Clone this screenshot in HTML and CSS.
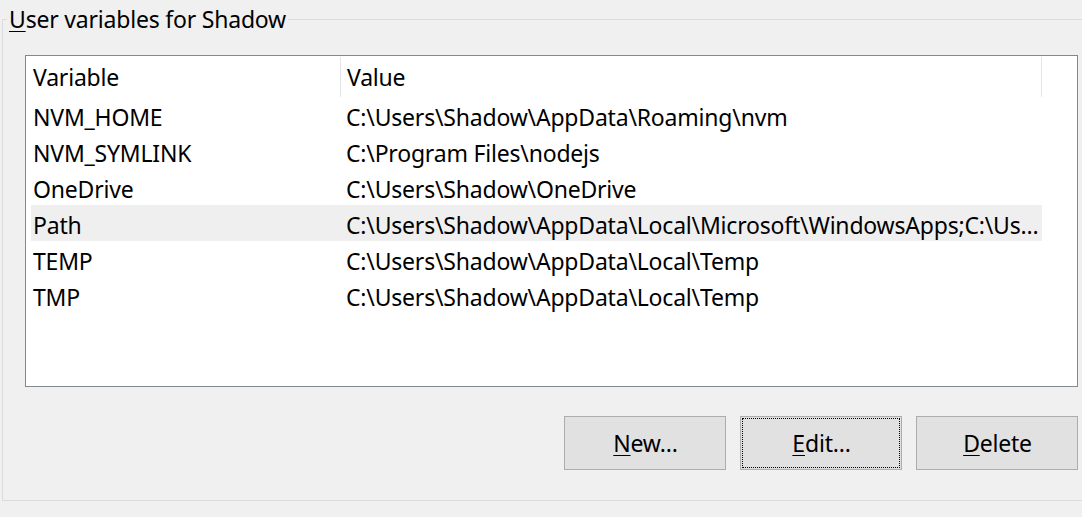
FILE: index.html
```html
<!DOCTYPE html>
<html>
<head>
<meta charset="utf-8">
<link rel="stylesheet" href="styles.css">
</head>
<body>
<fieldset class="group">
  <legend class="group-title"><u>U</u>ser variables for Shadow</legend>
  <div class="listview">
    <div class="lv-header">
      <div class="hcell hcell-first">Variable</div>
      <div class="hcell hcell-sep">Value</div>
      <div class="hcell hcell-sep"></div>
    </div>
    <div class="lv-rows">
      <div class="row"><div class="c1">NVM_HOME</div><div class="c2">C:\Users\Shadow\AppData\Roaming\nvm</div></div>
      <div class="row"><div class="c1">NVM_SYMLINK</div><div class="c2">C:\Program Files\nodejs</div></div>
      <div class="row"><div class="c1">OneDrive</div><div class="c2">C:\Users\Shadow\OneDrive</div></div>
      <div class="row row-selected"><div class="c1">Path</div><div class="c2">C:\Users\Shadow\AppData\Local\Microsoft\WindowsApps;C:\Us…</div></div>
      <div class="row"><div class="c1">TEMP</div><div class="c2">C:\Users\Shadow\AppData\Local\Temp</div></div>
      <div class="row"><div class="c1">TMP</div><div class="c2">C:\Users\Shadow\AppData\Local\Temp</div></div>
    </div>
  </div>
  <div class="buttons">
    <button class="btn"><u>N</u>ew...</button>
    <button class="btn btn-focus"><u>E</u>dit...</button>
    <button class="btn"><u>D</u>elete</button>
  </div>
</fieldset>
</body>
</html>
```
FILE: styles.css
```css
html, body {
  margin: 0;
  padding: 0;
  background: #f0f0f0;
  overflow: hidden;
  width: 1082px;
  height: 517px;
}
body {
  font-family: "Noto Sans", "Open Sans", sans-serif;
  font-size: 23px;
  letter-spacing: -0.2px;
  color: #000;
}
.group {
  margin: 4px 0 0 2px;
  padding: 20px 0 30px 22px;
  border: 1px solid #dcdcdc;
  width: 1100px;
  box-sizing: border-box;
  min-width: 0;
}
.group-title {
  margin-left: -18px;
  padding: 0 2px;
  line-height: 31px;
}
u {
  text-decoration-thickness: 1px;
  text-underline-offset: 3px;
}
.listview {
  width: 1053px;
  height: 332px;
  box-sizing: border-box;
  border: 1px solid #828790;
  background: #fff;
  overflow: hidden;
}
.lv-header {
  display: grid;
  grid-template-columns: 314px 701px 1fr;
  height: 41px;
}
.hcell {
  white-space: nowrap;
  padding-top: 2px;
  line-height: 39px;
}
.hcell-first {
  padding-left: 7px;
}
.hcell-sep {
  border-left: 1px solid #e5e5e5;
  padding-left: 6px;
  margin-top: 1px;
  padding-top: 1px;
}
.lv-rows {
  padding-left: 5px;
}
.row {
  display: grid;
  grid-template-columns: 309px 702px;
  height: 36px;
  width: 1011px;
}
.row-selected {
  background: #efefef;
}
.c1, .c2 {
  white-space: nowrap;
  padding-top: 4px;
  line-height: 32px;
}
.c1 {
  padding-left: 2px;
}
.c2 {
  padding-left: 6px;
  overflow: hidden;
}
.buttons {
  display: flex;
  justify-content: flex-end;
  gap: 14px;
  width: 1053px;
  margin-top: 29px;
}
.btn {
  width: 162px;
  height: 54px;
  box-sizing: border-box;
  background: #e1e1e1;
  border: 1px solid #adadad;
  font: inherit;
  letter-spacing: inherit;
  color: #000;
  padding: 0 0 0 1px;
  margin: 0;
}
.btn-focus {
  outline: 1px dotted #000;
  outline-offset: -3px;
}
```
